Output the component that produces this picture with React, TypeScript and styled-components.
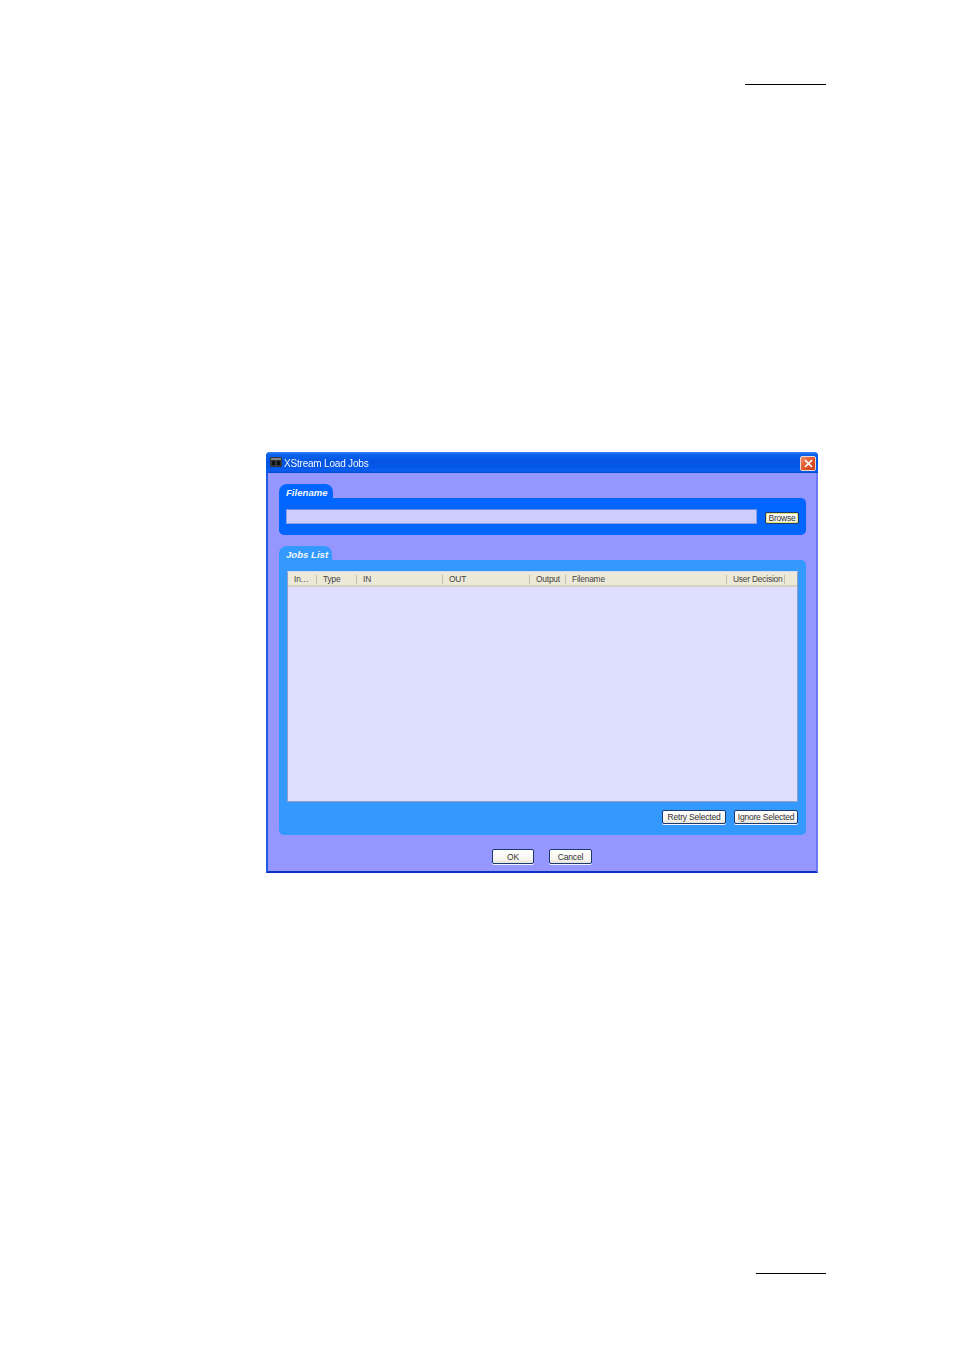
import React from "react";
import styled, { createGlobalStyle } from "styled-components";

const Global = createGlobalStyle`
  html, body { margin: 0; padding: 0; background: #fff; }
  * { box-sizing: border-box; }
`;

const Page = styled.div`
  width: 954px;
  height: 1350px;
  background: #fff;
  display: flex;
  flex-direction: column;
  font-family: "Liberation Sans", Arial, sans-serif;
  overflow: hidden;
`;

const Rule = styled.div<{ $left: number; $top: number; $width: number }>`
  height: 1px;
  background: #000;
  width: ${(p) => p.$width}px;
  margin-left: ${(p) => p.$left}px;
  margin-top: ${(p) => p.$top}px;
`;

const Window = styled.section`
  width: 552px;
  height: 421px;
  margin-left: 266px;
  margin-top: 367px;
  border-radius: 4px 4px 0 0;
  background: #9696ff;
  display: flex;
  flex-direction: column;
  border-left: 2px solid #1f5be0;
  border-right: 2px solid #6c78f4;
  border-bottom: 2px solid #0c34c4;
`;

const TitleBar = styled.header`
  height: 21px;
  margin: 0 -2px;
  padding: 0 2px 0 4px;
  border-radius: 4px 4px 0 0;
  background: linear-gradient(180deg, #3a86f8 0%, #0a62ee 12%, #0454e0 45%, #0558ea 75%, #0a5ef0 90%, #0348d0 100%);
  display: flex;
  align-items: center;
  gap: 2px;
`;

const AppIcon = styled.svg`
  width: 12px;
  height: 10px;
  margin-top: -2px;
  flex: none;
`;

const Title = styled.span`
  flex: 1;
  color: #f4f7ff;
  font-size: 10px;
  letter-spacing: -0.2px;
  line-height: 12px;
  margin-top: 3px;
  filter: blur(0.25px);
`;

const CloseButton = styled.button`
  width: 16px;
  height: 15px;
  margin-top: 2px;
  padding: 0;
  border: 1px solid #f0d8d0;
  border-radius: 2px;
  background: linear-gradient(135deg, #ee8a68 0%, #e05428 55%, #c83c14 100%);
  display: flex;
  align-items: center;
  justify-content: center;
`;

const Body = styled.div`
  flex: 1;
  padding: 11px 11px 0 11px;
  display: flex;
  flex-direction: column;
`;

const Group = styled.div<{ $mt?: number }>`
  margin-top: ${(p) => p.$mt ?? 0}px;
  display: flex;
  flex-direction: column;
  align-items: flex-start;
`;

const Tab = styled.div<{ $bg: string; $w: number }>`
  width: ${(p) => p.$w}px;
  height: 15px;
  margin-bottom: -1px;
  background: ${(p) => p.$bg};
  border-radius: 8px 8px 0 0;
  color: #f2f6ff;
  font-size: 9.6px;
  font-weight: bold;
  font-style: italic;
  line-height: 18px;
  padding-left: 7px;
  white-space: nowrap;
`;

const Panel = styled.div<{ $bg: string; $h: number }>`
  width: 527px;
  height: ${(p) => p.$h}px;
  background: ${(p) => p.$bg};
  border-radius: 0 5px 5px 5px;
  padding: 11px 7px 0 8px;
  display: flex;
  flex-direction: column;
`;

const FileRow = styled.div`
  display: flex;
  align-items: flex-start;
`;

const FileInput = styled.div`
  width: 471px;
  height: 15px;
  margin-left: -1px;
  background: #ccccff;
  border: 1px solid #8fa0e0;
  border-top-color: #6f88d8;
`;

const Button = styled.button<{ $w: number; $h?: number; $focus?: boolean }>`
  width: ${(p) => p.$w}px;
  height: ${(p) => p.$h ?? 15}px;
  padding: 0;
  border: 1px solid #1a3a70;
  border-radius: 2px;
  background: linear-gradient(180deg, #ffffff 0%, #f6f5ee 70%, #e6e3d8 100%);
  box-shadow: ${(p) => (p.$focus ? "inset 0 0 0 1px #e8e070" : "0 1px 0 #f4f6ff")};
  color: #333;
  font-family: "Liberation Sans", Arial, sans-serif;
  font-size: 8.5px;
  letter-spacing: -0.2px;
  line-height: 10px;
  white-space: nowrap;
  flex: none;
`;

const BrowseWrap = styled.div`
  margin: 3px 0 0 8px;
  display: flex;
`;

const Table = styled.div`
  width: 511px;
  height: 231px;
  flex: none;
  background: #dedeff;
  border: 1px solid #8ea0c8;
  border-top-color: #d8dcea;
  display: flex;
  flex-direction: column;
`;

const HeadRow = styled.div`
  height: 15px;
  background: #ece9d8;
  border-bottom: 2px solid #d6d2c2;
  display: flex;
  flex: none;
`;

const HeadCell = styled.div<{ $w: number }>`
  width: ${(p) => p.$w}px;
  flex: none;
  height: 9px;
  margin-top: 3px;
  padding-left: 6px;
  border-right: 1px solid #c4c0ae;
  color: #444;
  font-size: 8.4px;
  letter-spacing: -0.2px;
  line-height: 9px;
  white-space: nowrap;
  overflow: hidden;
`;

const ActionRow = styled.div`
  display: flex;
  justify-content: flex-end;
  gap: 8px;
  margin-top: 8px;
  padding-right: 1px;
`;

const Footer = styled.div`
  display: flex;
  justify-content: flex-start;
  gap: 15px;
  margin-top: 14px;
  padding-left: 213px;
`;

const cols: [string, number][] = [
  ["In…", 29],
  ["Type", 40],
  ["IN", 86],
  ["OUT", 87],
  ["Output", 36],
  ["Filename", 161],
  ["User Decision", 58],
];

export default function App() {
  return (
    <Page>
      <Global />
      <Rule $left={745} $top={84} $width={81} />
      <Window>
        <TitleBar>
          <AppIcon viewBox="0 0 12 10">
            <rect x="0" y="0" width="12" height="10" rx="1" fill="#33373c" />
            <rect x="1" y="1" width="10" height="2" fill="#7c8288" />
            <rect x="2" y="4" width="3" height="4" fill="#0e1012" />
            <rect x="7" y="4" width="3" height="4" fill="#0e1012" />
          </AppIcon>
          <Title>XStream Load Jobs</Title>
          <CloseButton aria-label="Close">
            <svg width="9" height="9" viewBox="0 0 9 9">
              <path d="M1 1 L8 8 M8 1 L1 8" stroke="#fff" strokeWidth="1.7" />
            </svg>
          </CloseButton>
        </TitleBar>
        <Body>
          <Group>
            <Tab $bg="#0066ff" $w={54}>Filename</Tab>
            <Panel $bg="#0066ff" $h={37}>
              <FileRow>
                <FileInput />
                <BrowseWrap>
                  <Button $w={34} $h={12} $focus>Browse</Button>
                </BrowseWrap>
              </FileRow>
            </Panel>
          </Group>
          <Group $mt={11}>
            <Tab $bg="#3399ff" $w={53}>Jobs List</Tab>
            <Panel $bg="#3399ff" $h={275}>
              <Table>
                <HeadRow>
                  {cols.map(([label, w]) => (
                    <HeadCell key={label} $w={w}>{label}</HeadCell>
                  ))}
                </HeadRow>
              </Table>
              <ActionRow>
                <Button $w={64} $h={14}>Retry Selected</Button>
                <Button $w={64} $h={14}>Ignore Selected</Button>
              </ActionRow>
            </Panel>
          </Group>
          <Footer>
            <Button $w={42}>OK</Button>
            <Button $w={43}>Cancel</Button>
          </Footer>
        </Body>
      </Window>
      <Rule $left={756} $top={400} $width={70} />
    </Page>
  );
}
